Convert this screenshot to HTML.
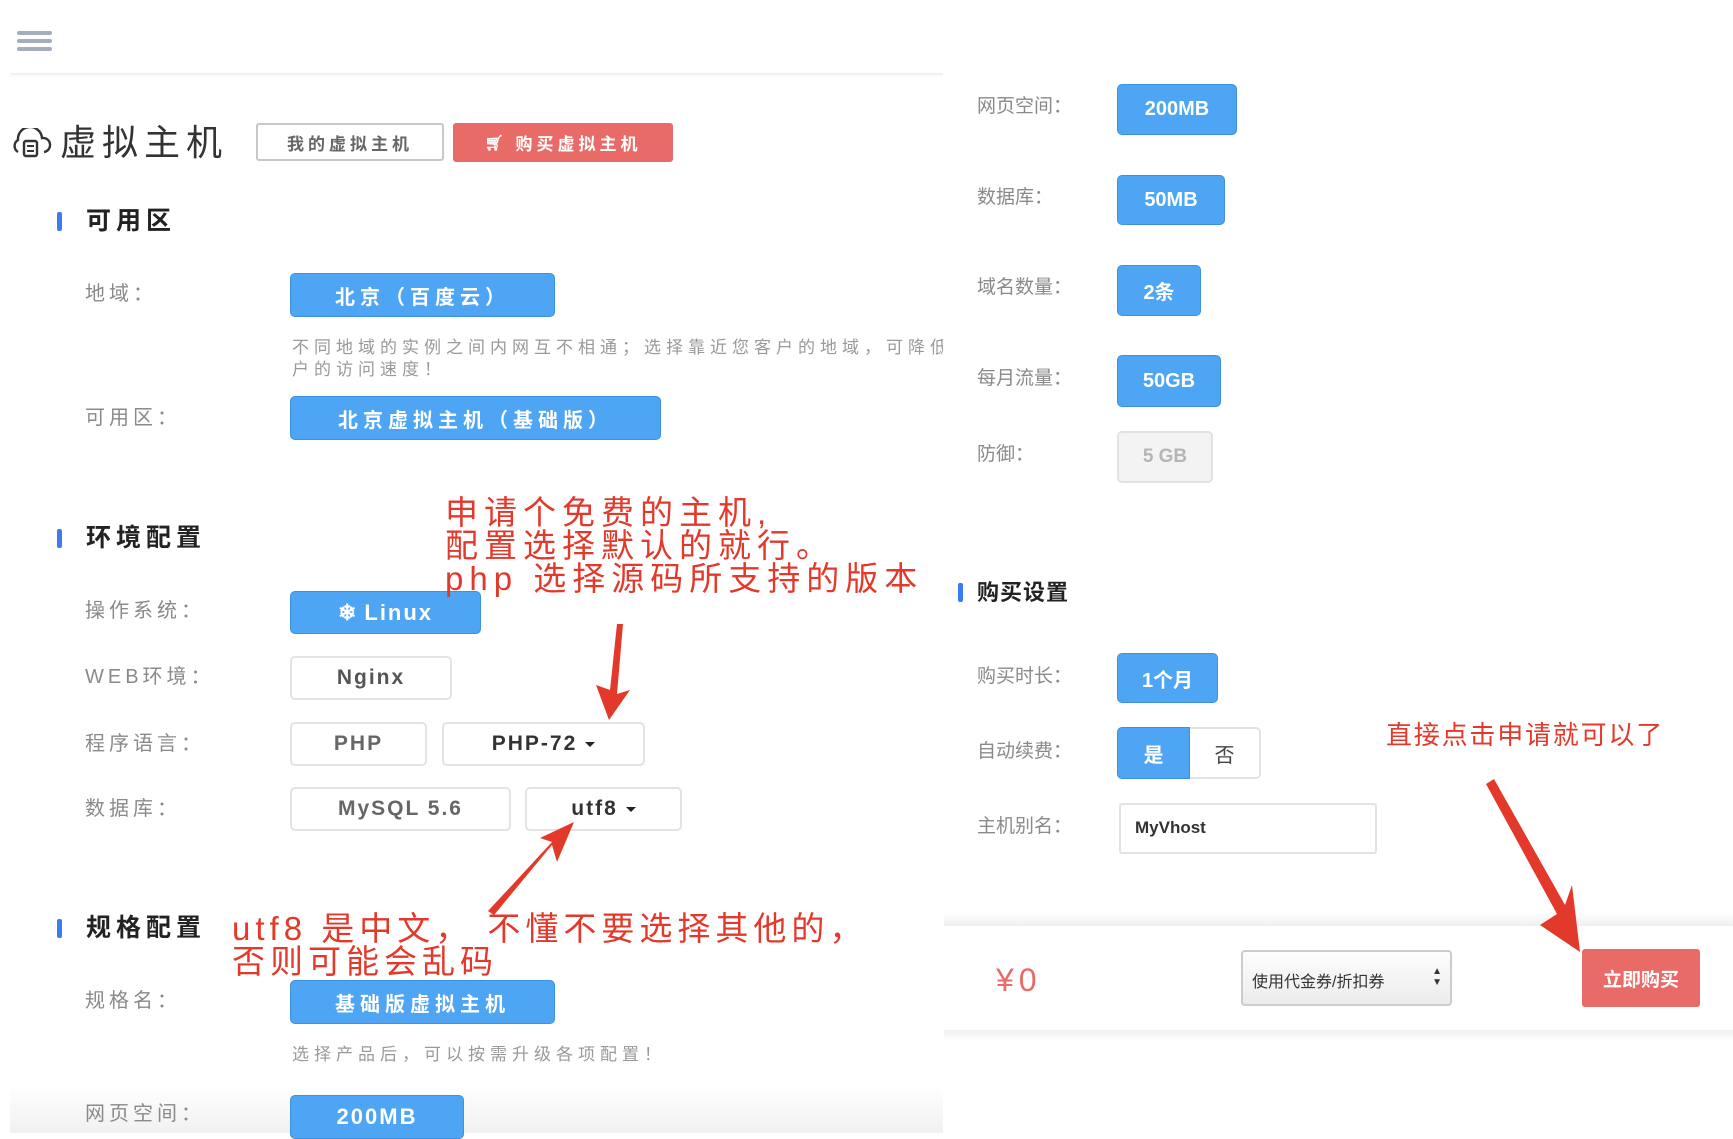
<!DOCTYPE html>
<html><head><meta charset="utf-8"><style>
*{margin:0;padding:0;box-sizing:border-box}
body{width:1733px;height:1133px;overflow:hidden;background:#fff;position:relative;font-family:"Liberation Sans","Noto Sans CJK SC",sans-serif}
.a{position:absolute;white-space:nowrap}
.lbl{position:absolute;font-size:20px;color:#8a8a8a;line-height:24px;white-space:nowrap;letter-spacing:4px}
.rl{font-size:19px;letter-spacing:0}
.btn{position:absolute;display:flex;align-items:center;justify-content:center;border-radius:5px;font-weight:bold;white-space:nowrap}
.blue{background:#4ea5f3;color:#fff;border:1px solid #3d91de;font-size:20px}
.ls{letter-spacing:5px}
.lat{letter-spacing:2px;font-size:22px}
.wht{background:#fff;color:#555;border:2px solid #e3e3e3;font-size:21px}
.sec{position:absolute;font-size:25px;font-weight:bold;color:#222;line-height:28px;letter-spacing:5px}
.bar{position:absolute;width:5px;height:19px;background:#3b7cf3;border-radius:2px}
.ann{position:absolute;color:#e3392b;font-size:33px;line-height:33px;white-space:nowrap;letter-spacing:6px}
.help{position:absolute;font-size:17px;color:#999;line-height:22px;white-space:nowrap;letter-spacing:5px}
.caret{display:inline-block;width:0;height:0;border-left:5px solid transparent;border-right:5px solid transparent;border-top:5px solid #222;margin-left:8px;vertical-align:middle}
</style></head><body>
<div class="a" style="left:17px;top:31px;width:35px;height:4px;background:#a4adba;border-radius:2px"></div>
<div class="a" style="left:17px;top:39px;width:35px;height:4px;background:#a4adba;border-radius:2px"></div>
<div class="a" style="left:17px;top:47px;width:35px;height:4px;background:#a4adba;border-radius:2px"></div>
<div class="a" style="left:10px;top:73px;width:933px;height:3px;background:linear-gradient(#eee,#fafafa)"></div>

<svg class="a" style="left:10px;top:128px" width="42" height="30" viewBox="0 0 42 30"><path d="M8 24 A7 7 0 0 1 8 12 A12 12 0 0 1 32 10 A7 7 0 0 1 34 24" fill="none" stroke="#333" stroke-width="2.4"/><rect x="14" y="13" width="13" height="15" rx="2" fill="none" stroke="#333" stroke-width="2.4"/><line x1="17" y1="18" x2="24" y2="18" stroke="#333" stroke-width="2"/><line x1="17" y1="23" x2="24" y2="23" stroke="#333" stroke-width="2"/></svg>
<div class="a" style="left:60px;top:121px;font-size:36px;color:#333;line-height:44px;letter-spacing:6px">虚拟主机</div>
<div class="btn" style="left:256px;top:123px;width:188px;height:38px;border:2px solid #c8c8c8;color:#666;font-size:17px;border-radius:3px;letter-spacing:4px">我的虚拟主机</div>
<div class="btn" style="left:453px;top:123px;width:220px;height:39px;background:#e96b67;color:#fff;font-size:17px;border-radius:3px;letter-spacing:4px"><span style="font-size:15px;margin-right:8px">🛒︎</span>购买虚拟主机</div>

<div class="bar" style="left:57px;top:212px"></div><div class="sec" style="left:86px;top:207px">可用区</div>
<div class="lbl" style="left:85px;top:282px">地域：</div>
<div class="btn blue ls" style="left:290px;top:273px;width:265px;height:44px">北京（百度云）</div>
<div class="help" style="left:292px;top:337px">不同地域的实例之间内网互不相通；选择靠近您客户的地域，可降低</div>
<div class="a" style="left:943px;top:330px;width:60px;height:30px;background:#fff"></div>
<div class="help" style="left:292px;top:359px">户的访问速度！</div>
<div class="lbl" style="left:85px;top:406px">可用区：</div>
<div class="btn blue ls" style="left:290px;top:396px;width:371px;height:44px">北京虚拟主机（基础版）</div>

<div class="bar" style="left:57px;top:529px"></div><div class="sec" style="left:86px;top:524px">环境配置</div>
<div class="lbl" style="left:85px;top:599px">操作系统：</div>
<div class="btn blue lat" style="left:290px;top:591px;width:191px;height:43px"><span style="margin-right:6px">❄</span>Linux</div>
<div class="lbl" style="left:85px;top:665px">WEB环境：</div>
<div class="btn wht lat" style="left:290px;top:656px;width:162px;height:44px">Nginx</div>
<div class="lbl" style="left:85px;top:732px">程序语言：</div>
<div class="btn wht lat" style="left:290px;top:722px;width:137px;height:44px;color:#666">PHP</div>
<div class="btn wht lat" style="left:442px;top:722px;width:203px;height:44px;color:#333">PHP-72<span class="caret"></span></div>
<div class="lbl" style="left:85px;top:797px">数据库：</div>
<div class="btn wht lat" style="left:290px;top:787px;width:221px;height:44px;color:#666">MySQL 5.6</div>
<div class="btn wht lat" style="left:525px;top:787px;width:157px;height:44px;color:#333">utf8<span class="caret"></span></div>

<div class="bar" style="left:57px;top:919px"></div><div class="sec" style="left:86px;top:914px">规格配置</div>
<div class="lbl" style="left:85px;top:989px">规格名：</div>
<div class="btn blue ls" style="left:290px;top:980px;width:265px;height:44px">基础版虚拟主机</div>
<div class="help" style="left:292px;top:1044px">选择产品后，可以按需升级各项配置！</div>
<div class="a" style="left:10px;top:1085px;width:933px;height:48px;background:linear-gradient(#fff,#f1f1f1)"></div>
<div class="lbl" style="left:85px;top:1102px">网页空间：</div>
<div class="btn blue lat" style="left:290px;top:1095px;width:174px;height:44px">200MB</div>

<div class="ann" style="left:445px;top:496px">申请个免费的主机,</div>
<div class="ann" style="left:445px;top:529px">配置选择默认的就行。</div>
<div class="ann" style="left:445px;top:562px">php 选择源码所支持的版本</div>
<div class="ann" style="left:232px;top:912px;letter-spacing:5px">utf8 是中文，&nbsp;不懂不要选择其他的，</div>
<div class="ann" style="left:232px;top:945px;letter-spacing:5px">否则可能会乱码</div>

<div class="lbl rl" style="left:977px;top:95px">网页空间：</div>
<div class="btn blue" style="left:1117px;top:84px;width:120px;height:51px">200MB</div>
<div class="lbl rl" style="left:977px;top:186px">数据库：</div>
<div class="btn blue" style="left:1117px;top:175px;width:108px;height:50px">50MB</div>
<div class="lbl rl" style="left:977px;top:276px">域名数量：</div>
<div class="btn blue" style="left:1117px;top:265px;width:84px;height:51px">2条</div>
<div class="lbl rl" style="left:977px;top:367px">每月流量：</div>
<div class="btn blue" style="left:1117px;top:355px;width:104px;height:52px">50GB</div>
<div class="lbl rl" style="left:977px;top:443px">防御：</div>
<div class="btn" style="left:1117px;top:431px;width:96px;height:52px;background:#f3f3f3;border:2px solid #e2e2e2;color:#b5b5b5;font-size:19px">5 GB</div>

<div class="bar" style="left:958px;top:583px"></div><div class="sec" style="left:977px;top:579px;font-size:22px;letter-spacing:1px">购买设置</div>
<div class="lbl rl" style="left:977px;top:665px">购买时长：</div>
<div class="btn blue" style="left:1117px;top:653px;width:101px;height:50px">1个月</div>
<div class="lbl rl" style="left:977px;top:740px">自动续费：</div>
<div class="btn blue" style="left:1117px;top:727px;width:73px;height:52px;border-radius:5px 0 0 5px">是</div>
<div class="btn" style="left:1190px;top:727px;width:71px;height:52px;border:2px solid #e3e3e3;border-left:none;border-radius:0 5px 5px 0;color:#444;font-size:20px;font-weight:normal">否</div>
<div class="lbl rl" style="left:977px;top:815px">主机别名：</div>
<div class="a" style="left:1119px;top:803px;width:258px;height:51px;border:2px solid #e3e3e3;border-radius:3px;font-size:17px;font-weight:bold;color:#333;padding:13px 0 0 14px">MyVhost</div>
<div class="ann" style="left:1386px;top:719px;font-size:26px;letter-spacing:1.8px">直接点击申请就可以了</div>

<div class="a" style="left:944px;top:912px;width:789px;height:14px;background:linear-gradient(#fff,#efefef)"></div>
<div class="a" style="left:944px;top:1030px;width:789px;height:10px;background:linear-gradient(#efefef,#fff)"></div>
<div class="a" style="left:996px;top:960px;font-size:32px;color:#e96b67;line-height:40px;letter-spacing:5px">¥0</div>
<div class="a" style="left:1241px;top:950px;width:211px;height:56px;border:2px solid #ccc;border-radius:4px;background:linear-gradient(#fdfdfd,#ececec);font-size:16px;color:#333;padding:16px 0 0 9px">使用代金券/折扣券<span style="position:absolute;right:8px;top:14px;font-size:10px;line-height:11px">▲<br>▼</span></div>
<div class="btn" style="left:1582px;top:949px;width:118px;height:58px;background:#e96b67;color:#fff;font-size:19px;border-radius:3px">立即购买</div>

<svg class="a" style="left:0;top:0" width="1733" height="1133">
<polygon points="617,624 623,624 617,694 630,690 609,720 596,685 610,690" fill="#e3392b"/>
<polygon points="488,911 494,915 552,845 557,862 574,822 540,838 552,842" fill="#e3392b"/>
<polygon points="1486,784 1494,779 1565,905 1572,885 1580,952 1540,925 1557,914" fill="#e3392b"/>
</svg>
</body></html>
